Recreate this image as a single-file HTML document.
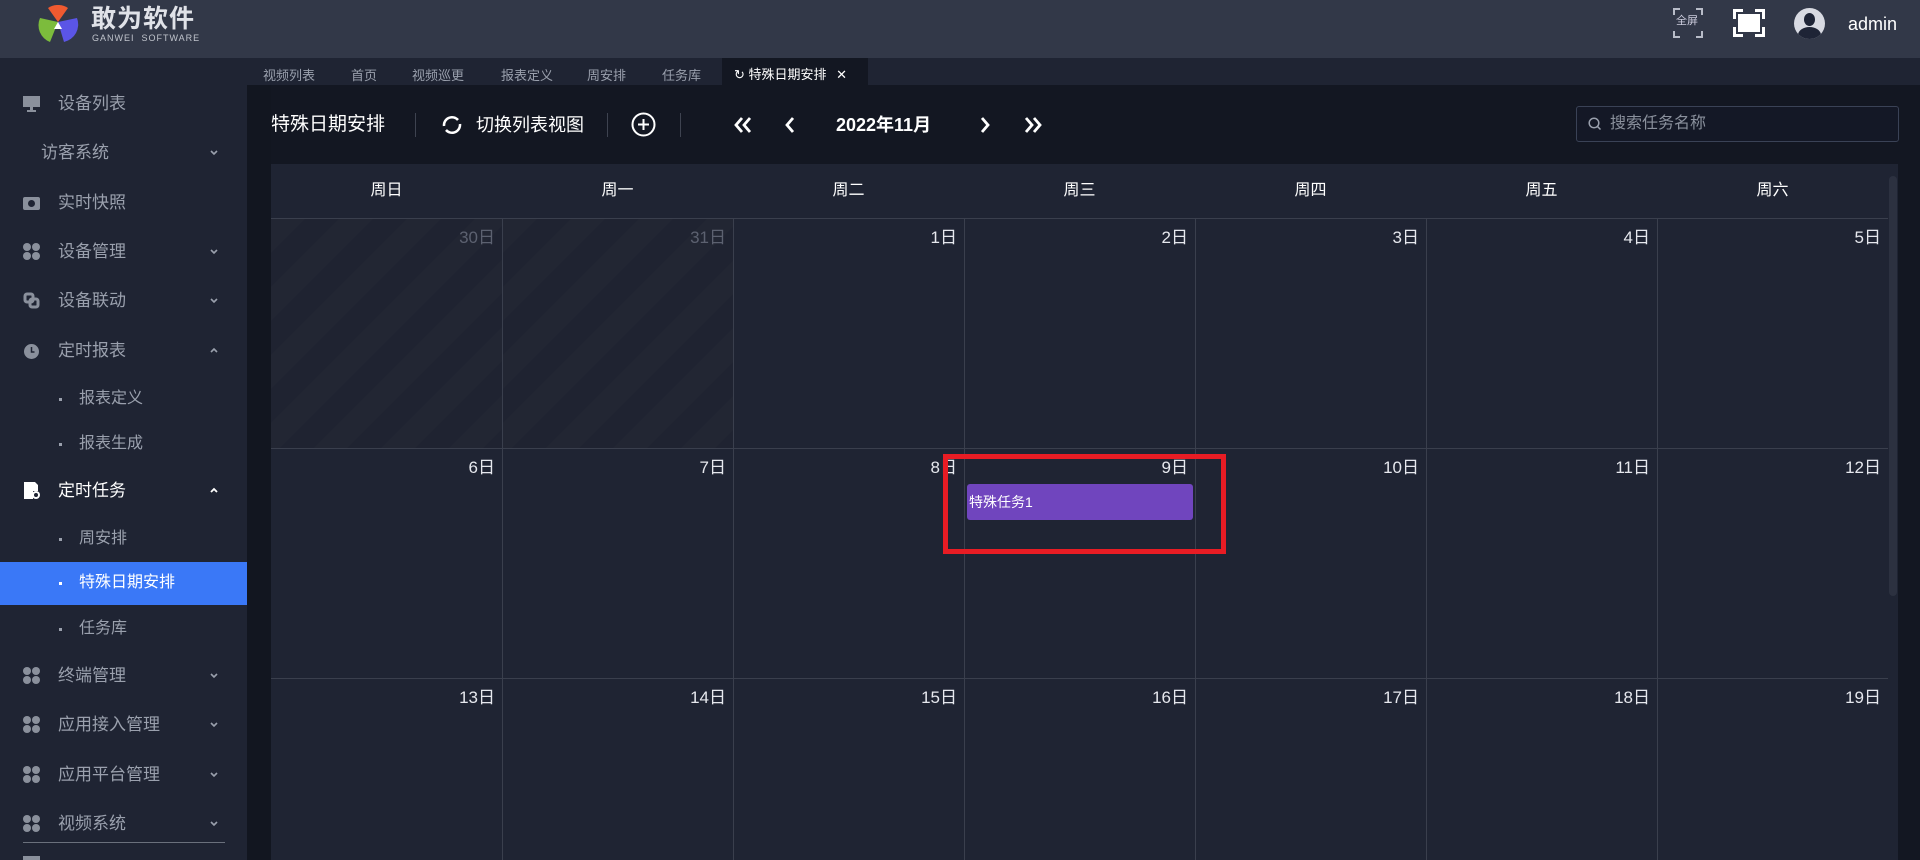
<!DOCTYPE html>
<html style="width:1920px;height:860px;overflow:hidden"><head><meta charset="utf-8"><style>
*{margin:0;padding:0;box-sizing:border-box}
body{width:1920px;height:860px;overflow:hidden;background:#131722;font-family:"Liberation Sans","Noto Sans CJK SC",sans-serif;color:#c8ccd6;position:relative}
.hdr{position:absolute;left:0;top:0;width:1920px;height:58px;background:#323848}
.side{position:absolute;left:0;top:58px;width:247px;height:802px;background:#1f2433;overflow:hidden}
.strip{position:absolute;left:247px;top:85px;width:24px;height:775px;background:#121620}
.tabs{position:absolute;left:247px;top:58px;width:1673px;height:27px;background:#1f2433;font-size:13px;color:#9aa0ad}
.tabs span{position:absolute;top:7px}
.tabs .act{position:absolute;left:475px;top:0;width:146px;height:27px;background:#131722;color:#fff;padding:6px 0 0 12px}
.item{position:absolute;left:0;width:247px;height:40px;font-size:17px;line-height:22px;color:#9aa0ad}
.item .ic{position:absolute;left:23px;top:11px;width:17px;height:17px}
.item .t{position:absolute;left:58px;top:9px}
.item .ar{position:absolute;left:209px;top:16px}
.sub{position:absolute;left:0;width:247px;height:40px;font-size:16px;line-height:20px;color:#9aa0ad}
.sub .t{position:absolute;left:79px;top:10px}
.sub .d{position:absolute;left:59px;top:19px;width:3px;height:3px;background:#9aa0ad}
.cal{position:absolute;left:271px;top:164px;width:1617px;height:696px;background:#1f2433;overflow:hidden}
.wh{position:absolute;top:0;width:231px;height:54px;text-align:center;line-height:54px;font-size:16px;color:#fff}
.cell{position:absolute;width:231px;height:230px;border-left:1px solid #3a3f4d;border-top:1px solid #3a3f4d}
.cell .n{position:absolute;right:7px;top:4px;font-size:17px;color:#e6e8ee}
.cell.o{background:repeating-linear-gradient(135deg,#222633 0 24px,#1f2331 24px 48px)}
.cell.o .n{color:#5c6170}
.cn{position:absolute;width:7px;height:7px;border-color:#b8bcc8;border-style:solid;border-width:0}
</style></head><body>
<div class="hdr">
 <svg style="position:absolute;left:37px;top:5px" width="42" height="38" viewBox="0 0 42 38">
  <path d="M21 17 L11 3 A18 18 0 0 1 31 3 Z" fill="#f05a30"/>
  <path d="M21 17 L3 13 A18 18 0 0 0 13 37 Z" fill="#7cbc3c"/>
  <path d="M21 17 L40 13 A18 18 0 0 1 27 37 Z" fill="#5b55e6"/>
  <path d="M21 17 L17 24 L25 24 Z" fill="#fff"/>
 </svg>
 <div style="position:absolute;left:91px;top:6px;font-size:25px;line-height:27px;font-weight:bold;color:#e0e2e8;letter-spacing:1px">敢为软件</div>
 <div style="position:absolute;left:92px;top:33px;font-size:9px;line-height:10px;color:#c0c4cc;letter-spacing:1px">GANWEI&nbsp; SOFTWARE</div>
 <div class="cn" style="left:1673px;top:8px;border-left-width:2px;border-top-width:2px"></div>
 <div class="cn" style="left:1696px;top:8px;border-right-width:2px;border-top-width:2px"></div>
 <div class="cn" style="left:1673px;top:31px;border-left-width:2px;border-bottom-width:2px"></div>
 <div class="cn" style="left:1696px;top:31px;border-right-width:2px;border-bottom-width:2px"></div>
 <div style="position:absolute;left:1676px;top:15px;font-size:11px;line-height:12px;color:#ccd">全屏</div>
 <div class="cn" style="left:1733px;top:9px;width:10px;height:10px;border-color:#fff;border-left-width:3px;border-top-width:3px"></div>
 <div class="cn" style="left:1755px;top:9px;width:10px;height:10px;border-color:#fff;border-right-width:3px;border-top-width:3px"></div>
 <div class="cn" style="left:1733px;top:27px;width:10px;height:10px;border-color:#fff;border-left-width:3px;border-bottom-width:3px"></div>
 <div class="cn" style="left:1755px;top:27px;width:10px;height:10px;border-color:#fff;border-right-width:3px;border-bottom-width:3px"></div>
 <div style="position:absolute;left:1738px;top:14px;width:22px;height:18px;background:#fff"></div>
 <div style="position:absolute;left:1794px;top:8px;width:31px;height:31px;border-radius:50%;overflow:hidden;background:#d8dae2">
  <div style="position:absolute;left:10px;top:5px;width:11px;height:13px;border-radius:50%;background:#1e2436"></div>
  <div style="position:absolute;left:4px;top:19px;width:23px;height:16px;border-radius:50% 50% 0 0;background:#1e2436"></div>
 </div>
 <div style="position:absolute;left:1848px;top:13px;font-size:18px;line-height:22px;color:#fff">admin</div>
</div>
<div class="side">
 <div class="item" style="top:26px"><svg class="ic" viewBox="0 0 17 17"><rect x="0" y="1" width="17" height="11" fill="#8a909c"/><rect x="7" y="12" width="3" height="3" fill="#8a909c"/><rect x="4" y="15" width="9" height="2" fill="#8a909c"/></svg><span class="t">设备列表</span></div>
 <div class="item" style="top:75px"><span class="t" style="left:41px">访客系统</span><svg class="ar" width="10" height="7" viewBox="0 0 10 7" fill="none" stroke="#9aa0ad" stroke-width="1.6"><path d="M2 2l3 3 3-3"/></svg></div>
 <div class="item" style="top:125px"><svg class="ic" viewBox="0 0 17 17"><rect x="0" y="3" width="17" height="13" rx="2" fill="#8a909c"/><circle cx="8.5" cy="9.5" r="3.5" fill="#1f2433"/></svg><span class="t">实时快照</span></div>
 <div class="item" style="top:174px"><svg class="ic" viewBox="0 0 17 17" fill="#8a909c"><circle cx="4" cy="4" r="4"/><circle cx="13" cy="4" r="4"/><circle cx="4" cy="13" r="4"/><circle cx="13" cy="13" r="4"/></svg><span class="t">设备管理</span><svg class="ar" width="10" height="7" viewBox="0 0 10 7" fill="none" stroke="#9aa0ad" stroke-width="1.6"><path d="M2 2l3 3 3-3"/></svg></div>
 <div class="item" style="top:223px"><svg class="ic" viewBox="0 0 17 17" fill="none" stroke="#8a909c" stroke-width="3"><rect x="2" y="2" width="8" height="8" rx="2"/><rect x="7" y="7" width="8" height="8" rx="2"/></svg><span class="t">设备联动</span><svg class="ar" width="10" height="7" viewBox="0 0 10 7" fill="none" stroke="#9aa0ad" stroke-width="1.6"><path d="M2 2l3 3 3-3"/></svg></div>
 <div class="item" style="top:273px"><svg class="ic" viewBox="0 0 17 17"><circle cx="8.5" cy="9.5" r="7.5" fill="#8a909c"/><path d="M8.5 5v5h3" stroke="#1f2433" stroke-width="1.5" fill="none"/></svg><span class="t">定时报表</span><svg class="ar" width="10" height="7" viewBox="0 0 10 7" fill="none" stroke="#9aa0ad" stroke-width="1.6"><path d="M2 5l3-3 3 3"/></svg></div>
 <div class="sub" style="top:321px"><i class="d"></i><span class="t">报表定义</span></div>
 <div class="sub" style="top:366px"><i class="d"></i><span class="t">报表生成</span></div>
 <div class="item" style="top:413px;color:#fff"><svg class="ic" viewBox="0 0 17 17"><path d="M1 0h11l3 3v6h-5v8H1z" fill="#fff"/><circle cx="13" cy="13" r="4" fill="#fff"/><circle cx="13" cy="13" r="2" fill="#1f2433"/></svg><span class="t">定时任务</span><svg class="ar" width="10" height="7" viewBox="0 0 10 7" fill="none" stroke="#fff" stroke-width="1.8"><path d="M2 5l3-3 3 3"/></svg></div>
 <div class="sub" style="top:461px"><i class="d"></i><span class="t">周安排</span></div>
 <div class="sub" style="top:504px;height:43px;background:#3a78f7;color:#fff"><i class="d" style="background:#fff;top:20px"></i><span class="t" style="top:11px">特殊日期安排</span></div>
 <div class="sub" style="top:551px"><i class="d"></i><span class="t">任务库</span></div>
 <div class="item" style="top:598px"><svg class="ic" viewBox="0 0 17 17" fill="#8a909c"><circle cx="4" cy="4" r="4"/><circle cx="13" cy="4" r="4"/><circle cx="4" cy="13" r="4"/><circle cx="13" cy="13" r="4"/></svg><span class="t">终端管理</span><svg class="ar" width="10" height="7" viewBox="0 0 10 7" fill="none" stroke="#9aa0ad" stroke-width="1.6"><path d="M2 2l3 3 3-3"/></svg></div>
 <div class="item" style="top:647px"><svg class="ic" viewBox="0 0 17 17" fill="#8a909c"><circle cx="4" cy="4" r="4"/><circle cx="13" cy="4" r="4"/><circle cx="4" cy="13" r="4"/><circle cx="13" cy="13" r="4"/></svg><span class="t">应用接入管理</span><svg class="ar" width="10" height="7" viewBox="0 0 10 7" fill="none" stroke="#9aa0ad" stroke-width="1.6"><path d="M2 2l3 3 3-3"/></svg></div>
 <div class="item" style="top:697px"><svg class="ic" viewBox="0 0 17 17" fill="#8a909c"><circle cx="4" cy="4" r="4"/><circle cx="13" cy="4" r="4"/><circle cx="4" cy="13" r="4"/><circle cx="13" cy="13" r="4"/></svg><span class="t">应用平台管理</span><svg class="ar" width="10" height="7" viewBox="0 0 10 7" fill="none" stroke="#9aa0ad" stroke-width="1.6"><path d="M2 2l3 3 3-3"/></svg></div>
 <div class="item" style="top:746px"><svg class="ic" viewBox="0 0 17 17" fill="#8a909c"><circle cx="4" cy="4" r="4"/><circle cx="13" cy="4" r="4"/><circle cx="4" cy="13" r="4"/><circle cx="13" cy="13" r="4"/></svg><span class="t">视频系统</span><svg class="ar" width="10" height="7" viewBox="0 0 10 7" fill="none" stroke="#9aa0ad" stroke-width="1.6"><path d="M2 2l3 3 3-3"/></svg></div>
 <div style="position:absolute;left:23px;top:784px;width:202px;height:1px;background:#6a707c"></div>
 <div style="position:absolute;left:23px;top:798px;width:17px;height:4px;background:#8a909c"></div>
</div>
<div class="tabs">
 <span style="left:16px">视频列表</span><span style="left:104px">首页</span><span style="left:165px">视频巡更</span><span style="left:254px">报表定义</span><span style="left:340px">周安排</span><span style="left:415px">任务库</span>
 <div class="act">↻ 特殊日期安排 <span style="position:static;margin-left:6px">✕</span></div>
</div>
<div class="strip"></div>
<div style="position:absolute;left:271px;top:113px;font-size:19px;line-height:24px;color:#fff">特殊日期安排</div>
<div style="position:absolute;left:415px;top:113px;width:1px;height:24px;background:#3e4350"></div>
<svg style="position:absolute;left:440px;top:113px" width="24" height="24" viewBox="0 0 24 24" fill="none" stroke="#fff" stroke-width="2.5"><path d="M4 13a8 8 0 0 1 14-6"/><path d="M20 11a8 8 0 0 1-14 6"/></svg>
<div style="position:absolute;left:476px;top:113px;font-size:18px;line-height:24px;color:#fff">切换列表视图</div>
<div style="position:absolute;left:607px;top:113px;width:1px;height:24px;background:#3e4350"></div>
<svg style="position:absolute;left:631px;top:112px" width="25" height="25" viewBox="0 0 25 25" fill="none" stroke="#fff" stroke-width="2"><circle cx="12.5" cy="12.5" r="11"/><path d="M12.5 7v11M7 12.5h11"/></svg>
<div style="position:absolute;left:680px;top:113px;width:1px;height:24px;background:#3e4350"></div>
<svg style="position:absolute;left:733px;top:116px" width="20" height="18" viewBox="0 0 20 18" fill="none" stroke="#fff" stroke-width="2.8"><path d="M9 2 3 9l6 7M17 2l-6 7 6 7"/></svg>
<svg style="position:absolute;left:784px;top:116px" width="12" height="18" viewBox="0 0 12 18" fill="none" stroke="#fff" stroke-width="2.8"><path d="M9 2 3 9l6 7"/></svg>
<div style="position:absolute;left:836px;top:113px;font-size:18px;line-height:24px;font-weight:bold;color:#fff">2022年11月</div>
<svg style="position:absolute;left:979px;top:116px" width="12" height="18" viewBox="0 0 12 18" fill="none" stroke="#fff" stroke-width="2.8"><path d="M3 2l6 7-6 7"/></svg>
<svg style="position:absolute;left:1023px;top:116px" width="20" height="18" viewBox="0 0 20 18" fill="none" stroke="#fff" stroke-width="2.8"><path d="M3 2l6 7-6 7M11 2l6 7-6 7"/></svg>
<div style="position:absolute;left:1576px;top:106px;width:323px;height:36px;border:1px solid #3a4256;border-radius:3px;background:#141826"></div>
<svg style="position:absolute;left:1588px;top:117px" width="14" height="14" viewBox="0 0 14 14" fill="none" stroke="#9aa0ad" stroke-width="1.5"><circle cx="6" cy="6" r="4.8"/><path d="M9.5 9.5l3 3"/></svg>
<div style="position:absolute;left:1610px;top:113px;font-size:16px;line-height:22px;color:#8a909c">搜索任务名称</div>
<div class="cal">
 <div class="wh" style="left:0">周日</div><div class="wh" style="left:231px">周一</div><div class="wh" style="left:462px">周二</div><div class="wh" style="left:693px">周三</div><div class="wh" style="left:924px">周四</div><div class="wh" style="left:1155px">周五</div><div class="wh" style="left:1386px">周六</div>
 <div class="cell o" style="left:0;top:54px;border-left:none"><span class="n">30日</span></div>
 <div class="cell o" style="left:231px;top:54px"><span class="n">31日</span></div>
 <div class="cell" style="left:462px;top:54px"><span class="n">1日</span></div>
 <div class="cell" style="left:693px;top:54px"><span class="n">2日</span></div>
 <div class="cell" style="left:924px;top:54px"><span class="n">3日</span></div>
 <div class="cell" style="left:1155px;top:54px"><span class="n">4日</span></div>
 <div class="cell" style="left:1386px;top:54px"><span class="n">5日</span></div>
 <div class="cell" style="left:0;top:284px;border-left:none"><span class="n">6日</span></div>
 <div class="cell" style="left:231px;top:284px"><span class="n">7日</span></div>
 <div class="cell" style="left:462px;top:284px"><span class="n">8日</span></div>
 <div class="cell" style="left:693px;top:284px"><span class="n">9日</span></div>
 <div class="cell" style="left:924px;top:284px"><span class="n">10日</span></div>
 <div class="cell" style="left:1155px;top:284px"><span class="n">11日</span></div>
 <div class="cell" style="left:1386px;top:284px"><span class="n">12日</span></div>
 <div class="cell" style="left:0;top:514px;border-left:none"><span class="n">13日</span></div>
 <div class="cell" style="left:231px;top:514px"><span class="n">14日</span></div>
 <div class="cell" style="left:462px;top:514px"><span class="n">15日</span></div>
 <div class="cell" style="left:693px;top:514px"><span class="n">16日</span></div>
 <div class="cell" style="left:924px;top:514px"><span class="n">17日</span></div>
 <div class="cell" style="left:1155px;top:514px"><span class="n">18日</span></div>
 <div class="cell" style="left:1386px;top:514px"><span class="n">19日</span></div>
</div>
<div style="position:absolute;left:1888px;top:164px;width:10px;height:696px;background:#1f2433"></div>
<div style="position:absolute;left:1889px;top:176px;width:8px;height:420px;background:#2c3140;border-radius:4px"></div>
<div style="position:absolute;left:967px;top:484px;width:226px;height:36px;background:#7045be;border-radius:3px;color:#fff;font-size:14px;line-height:18px;padding:9px 0 0 2px">特殊任务1</div>
<div style="position:absolute;left:943px;top:454px;width:283px;height:100px;border:5px solid #e81c24"></div>
</body></html>
